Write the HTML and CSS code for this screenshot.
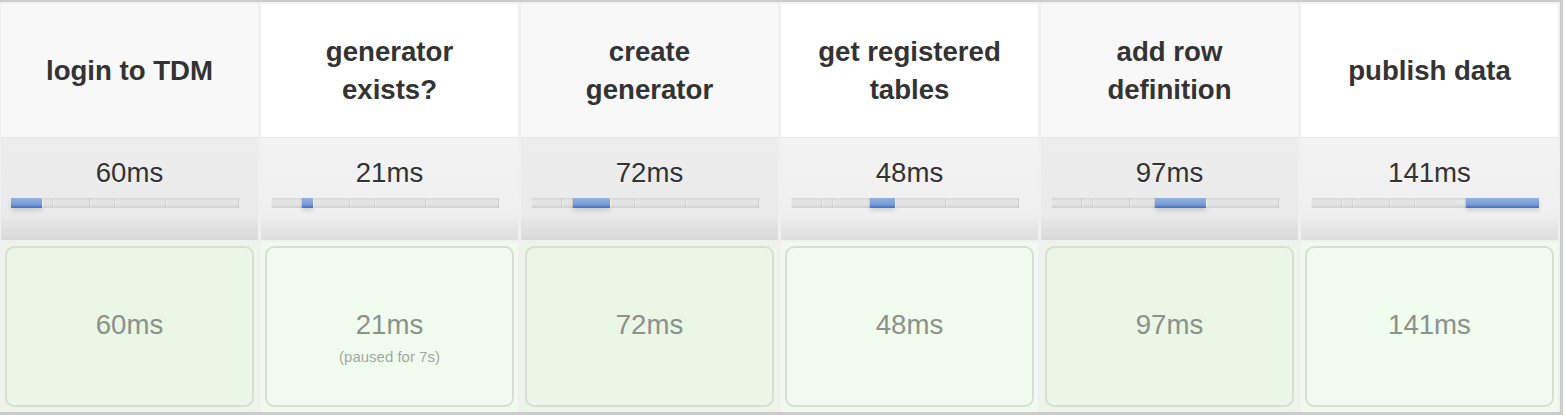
FILE: index.html
```html
<!DOCTYPE html>
<html lang="en">

<head>
    <meta charset="UTF-8">
    <meta name="viewport" content="width=device-width, initial-scale=1.0">
    <title>Stage View</title>
    <link rel="stylesheet" href="styles.css">
</head>

<body>
    <div class="stage-view">
        <div class="stage odd">
            <div class="stage-header">login to TDM</div>
            <div class="stage-duration">
                <div class="avg">60ms</div>
                <div class="timeline" data-current="0"></div>
            </div>
            <div class="stage-cell">
                <div class="stage-box">
                    <div class="stage-time">60ms</div>
                </div>
            </div>
        </div>
        <div class="stage even">
            <div class="stage-header">generator<br>exists?</div>
            <div class="stage-duration">
                <div class="avg">21ms</div>
                <div class="timeline" data-current="1"></div>
            </div>
            <div class="stage-cell">
                <div class="stage-box">
                    <div class="stage-time">21ms</div>
                    <div class="stage-note">(paused for 7s)</div>
                </div>
            </div>
        </div>
        <div class="stage odd">
            <div class="stage-header">create<br>generator</div>
            <div class="stage-duration">
                <div class="avg">72ms</div>
                <div class="timeline" data-current="2"></div>
            </div>
            <div class="stage-cell">
                <div class="stage-box">
                    <div class="stage-time">72ms</div>
                </div>
            </div>
        </div>
        <div class="stage even">
            <div class="stage-header">get registered<br>tables</div>
            <div class="stage-duration">
                <div class="avg">48ms</div>
                <div class="timeline" data-current="3"></div>
            </div>
            <div class="stage-cell">
                <div class="stage-box">
                    <div class="stage-time">48ms</div>
                </div>
            </div>
        </div>
        <div class="stage odd">
            <div class="stage-header">add row<br>definition</div>
            <div class="stage-duration">
                <div class="avg">97ms</div>
                <div class="timeline" data-current="4"></div>
            </div>
            <div class="stage-cell">
                <div class="stage-box">
                    <div class="stage-time">97ms</div>
                </div>
            </div>
        </div>
        <div class="stage even">
            <div class="stage-header">publish data</div>
            <div class="stage-duration">
                <div class="avg">141ms</div>
                <div class="timeline" data-current="5"></div>
            </div>
            <div class="stage-cell">
                <div class="stage-box">
                    <div class="stage-time">141ms</div>
                </div>
            </div>
        </div>
    </div>

    <script>
        // Durations of every stage, in ms
        const durations = [60, 21, 72, 48, 97, 141];
        const total = durations.reduce((a, b) => a + b, 0);

        // Build the little timeline bar under each average
        document.querySelectorAll('.timeline').forEach((timeline) => {
            const current = parseInt(timeline.dataset.current, 10);
            durations.forEach((ms, i) => {
                const seg = document.createElement('div');
                seg.className = i === current ? 'segment active' : 'segment';
                seg.style.width = (ms / total * 100) + '%';
                timeline.appendChild(seg);
            });
        });
    </script>
</body>

</html>
```

FILE: styles.css
```css
body {
    margin: 0;
    background-color: #fff;
    font-family: "Liberation Sans", Arial, Helvetica, sans-serif;
    color: #333;
}

.stage-view {
    width: 1563px;
    box-sizing: border-box;
    display: grid;
    grid-template-columns: repeat(6, 257px);
    column-gap: 3px;
    padding: 2px 2px 0 1px;
    background-color: #f0f0f0;
    border-top: 2px solid #ccc;
    border-right: 3px solid #ccc;
    border-bottom: 3px solid #ccc;
}

.stage {
    display: flex;
    flex-direction: column;
}

.stage-header {
    height: 133px;
    display: flex;
    align-items: center;
    justify-content: center;
    text-align: center;
    font-size: 27.6px;
    font-weight: bold;
    line-height: 38px;
    color: #333;
}

.odd .stage-header {
    background-color: #f8f8f8;
}

.even .stage-header {
    background-color: #fff;
}

.stage-duration {
    height: 103px;
    box-sizing: border-box;
    padding-top: 19px;
    border-top: 1px solid #e6e6e6;
}

.odd .stage-duration {
    background: linear-gradient(#ededed, #eaeaea 75%, #d9d9d9);
}

.even .stage-duration {
    background: linear-gradient(#f3f3f3, #f0f0f0 75%, #dedede);
}

.avg {
    text-align: center;
    font-size: 27.6px;
    line-height: 32px;
    color: #333;
    text-shadow: 0 1px 0 #fff;
}

.timeline {
    display: flex;
    width: 228px;
    height: 10px;
    margin: 9px 0 0 10px;
}

.segment {
    height: 100%;
    background: linear-gradient(#d6d6d6, #e6e6e6 35%, #e1e1e1 70%, #cfcfcf);
    box-shadow: inset -1px 0 rgba(0, 0, 0, 0.07), inset 1px 0 rgba(255, 255, 255, 0.3);
}

.segment.active {
    background: linear-gradient(#93b1e0, #7c9fd8 55%, #6a90d2 75%, #3f6cc6);
    box-shadow: 0 3px 4px rgba(0, 0, 0, 0.12);
}

.stage-cell {
    height: 170px;
    box-sizing: border-box;
    margin-top: 2px;
    padding: 4px 4px 5px 4px;
}

.odd .stage-cell {
    background-color: #edf5e9;
}

.even .stage-cell {
    background-color: #f1faef;
}

.stage-box {
    height: 100%;
    box-sizing: border-box;
    border: 2px solid #d9ddd6;
    border-radius: 9px;
    display: grid;
    grid-template-rows: 1fr auto 1fr;
    text-align: center;
}

.odd .stage-box {
    background-color: #eaf6e6;
}

.even .stage-box {
    background-color: #f0fdee;
}

.stage-time {
    grid-row: 2;
    margin-bottom: 4px;
    font-size: 27.6px;
    line-height: 32px;
    color: #8c918a;
}

.stage-note {
    grid-row: 3;
    margin-top: 3px;
    font-size: 15px;
    color: #a3a7a1;
}
```
